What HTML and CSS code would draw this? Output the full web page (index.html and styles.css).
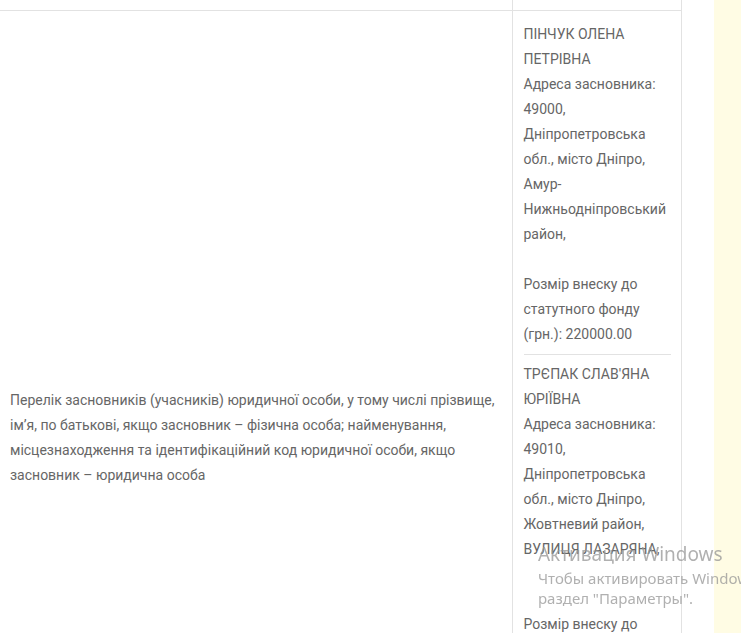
FILE: index.html
```html
<!DOCTYPE html>
<html lang="uk">
<head>
    <meta charset="UTF-8">
    <meta name="viewport" content="width=device-width, initial-scale=1">
    <title>Засновники</title>
    <link rel="stylesheet" href="styles.css">
</head>
<body>
    <div class="page">
        <table class="info-table">
            <colgroup>
                <col class="col-label">
                <col class="col-value">
            </colgroup>
            <tr class="row-top">
                <td class="label"></td>
                <td class="value"></td>
            </tr>
            <tr class="row-main">
                <td class="label">Перелік засновників (учасників) юридичної особи, у тому числі прізвище, ім’я, по батькові, якщо засновник – фізична особа; найменування, місцезнаходження та ідентифікаційний код юридичної особи, якщо засновник – юридична особа</td>
                <td class="value">
                    <div class="founder">
                        ПІНЧУК ОЛЕНА ПЕТРІВНА<br>
                        Адреса засновника: 49000, Дніпропетровська обл., місто Дніпро, Амур-Нижньодніпровський район,<br><br>
                        Розмір внеску до статутного фонду (грн.): 220000.00
                    </div>
                    <div class="founder">
                        ТРЄПАК СЛАВ'ЯНА ЮРІЇВНА<br>
                        Адреса засновника: 49010, Дніпропетровська обл., місто Дніпро, Жовтневий район, ВУЛИЦЯ ЛАЗАРЯНА,<br><br><br>
                        Розмір внеску до статутного фонду (грн.): 220000.00
                    </div>
                </td>
            </tr>
        </table>
    </div>
    <div class="activation">
        <div class="activation-title">Активация Windows</div>
        <div class="activation-text">Чтобы активировать Windows, перейдите в<br>раздел "Параметры".</div>
    </div>
</body>
</html>
```

FILE: styles.css
```css
:root {
    --text: #666;
    --line: #e2e2e2;
}
html, body {
    margin: 0;
    padding: 0;
    overflow: hidden;
}
body {
    background: #fffce4;
    font-family: Roboto, Arial, sans-serif;
    font-size: 14px;
    line-height: 25px;
    color: var(--text);
}
.page {
    width: 714px;
    min-height: 100vh;
    background: #fff;
}
.info-table {
    width: 681px;
    table-layout: fixed;
    border-collapse: collapse;
}
.col-label {
    width: 512px;
}
.col-value {
    width: 169px;
}
.info-table td {
    border: 1px solid var(--line);
    border-left: none;
    padding: 10px;
    vertical-align: middle;
}
.row-top td {
    height: 10px;
    padding: 0;
    border-top: none;
}
.row-main td {
    height: 833px;
}
.label {
    padding-bottom: 0;
}
.row-main .value {
    vertical-align: top;
    padding-top: 11px;
    padding-left: 11px;
}
.founder {
    padding-bottom: 7px;
}
.founder + .founder {
    border-top: 1px solid var(--line);
    padding-top: 7px;
}
.activation {
    position: fixed;
    left: 538px;
    top: 540px;
    color: rgba(150, 150, 150, 0.75);
    font-family: 'Noto Sans', 'Open Sans', sans-serif;
    white-space: nowrap;
    pointer-events: none;
}
.activation-title {
    font-size: 19px;
    line-height: 28px;
}
.activation-text {
    font-size: 15px;
    line-height: 20px;
}
```
